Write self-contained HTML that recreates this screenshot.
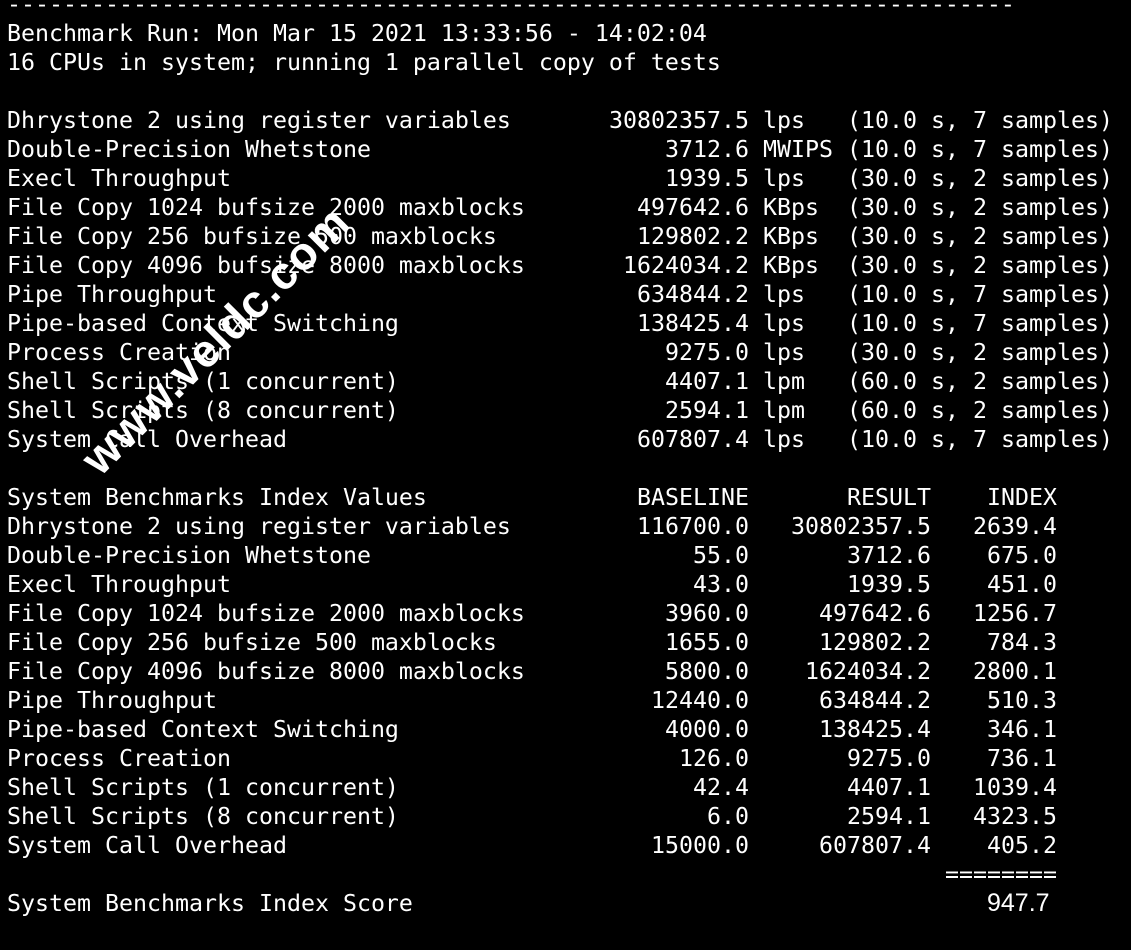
<!DOCTYPE html>
<html><head><meta charset="utf-8"><style>
html,body{margin:0;padding:0;background:#000;width:1131px;height:950px;overflow:hidden;position:relative}
.t{position:absolute;left:7px;top:-10px;font-family:"DejaVu Sans Mono","Liberation Mono",monospace;font-size:23.25px;line-height:29px;color:#fff}
.r{height:29px;white-space:pre}
.r span{display:inline-block;white-space:pre;vertical-align:top}
.n{width:602px}
.v{width:140px;text-align:right}
.u{width:98px}
.b2{width:182px;text-align:right}
.i{width:126px;text-align:right}
.wm{position:absolute;left:215px;top:340px;transform:translate(-50%,-50%) rotate(-45deg);font-family:"Liberation Sans",sans-serif;font-weight:bold;font-size:46px;color:#fff;white-space:nowrap;letter-spacing:1px}
.score{position:absolute;left:987px;top:889px;font-family:"Liberation Sans",sans-serif;font-size:25px;color:#fff}
</style></head><body>
<div class="t"><div class="r">------------------------------------------------------------------------</div><div class="r">Benchmark Run: Mon Mar 15 2021 13:33:56 - 14:02:04</div><div class="r">16 CPUs in system; running 1 parallel copy of tests</div><div class="r"></div><div class="r"><span class="n">Dhrystone 2 using register variables</span><span class="v">30802357.5</span><span class="u"> lps</span>(10.0 s, 7 samples)</div><div class="r"><span class="n">Double-Precision Whetstone</span><span class="v">3712.6</span><span class="u"> MWIPS</span>(10.0 s, 7 samples)</div><div class="r"><span class="n">Execl Throughput</span><span class="v">1939.5</span><span class="u"> lps</span>(30.0 s, 2 samples)</div><div class="r"><span class="n">File Copy 1024 bufsize 2000 maxblocks</span><span class="v">497642.6</span><span class="u"> KBps</span>(30.0 s, 2 samples)</div><div class="r"><span class="n">File Copy 256 bufsize 500 maxblocks</span><span class="v">129802.2</span><span class="u"> KBps</span>(30.0 s, 2 samples)</div><div class="r"><span class="n">File Copy 4096 bufsize 8000 maxblocks</span><span class="v">1624034.2</span><span class="u"> KBps</span>(30.0 s, 2 samples)</div><div class="r"><span class="n">Pipe Throughput</span><span class="v">634844.2</span><span class="u"> lps</span>(10.0 s, 7 samples)</div><div class="r"><span class="n">Pipe-based Context Switching</span><span class="v">138425.4</span><span class="u"> lps</span>(10.0 s, 7 samples)</div><div class="r"><span class="n">Process Creation</span><span class="v">9275.0</span><span class="u"> lps</span>(30.0 s, 2 samples)</div><div class="r"><span class="n">Shell Scripts (1 concurrent)</span><span class="v">4407.1</span><span class="u"> lpm</span>(60.0 s, 2 samples)</div><div class="r"><span class="n">Shell Scripts (8 concurrent)</span><span class="v">2594.1</span><span class="u"> lpm</span>(60.0 s, 2 samples)</div><div class="r"><span class="n">System Call Overhead</span><span class="v">607807.4</span><span class="u"> lps</span>(10.0 s, 7 samples)</div><div class="r"></div><div class="r"><span class="n">System Benchmarks Index Values</span><span class="v">BASELINE</span><span class="b2">RESULT</span><span class="i">INDEX</span></div><div class="r"><span class="n">Dhrystone 2 using register variables</span><span class="v">116700.0</span><span class="b2">30802357.5</span><span class="i">2639.4</span></div><div class="r"><span class="n">Double-Precision Whetstone</span><span class="v">55.0</span><span class="b2">3712.6</span><span class="i">675.0</span></div><div class="r"><span class="n">Execl Throughput</span><span class="v">43.0</span><span class="b2">1939.5</span><span class="i">451.0</span></div><div class="r"><span class="n">File Copy 1024 bufsize 2000 maxblocks</span><span class="v">3960.0</span><span class="b2">497642.6</span><span class="i">1256.7</span></div><div class="r"><span class="n">File Copy 256 bufsize 500 maxblocks</span><span class="v">1655.0</span><span class="b2">129802.2</span><span class="i">784.3</span></div><div class="r"><span class="n">File Copy 4096 bufsize 8000 maxblocks</span><span class="v">5800.0</span><span class="b2">1624034.2</span><span class="i">2800.1</span></div><div class="r"><span class="n">Pipe Throughput</span><span class="v">12440.0</span><span class="b2">634844.2</span><span class="i">510.3</span></div><div class="r"><span class="n">Pipe-based Context Switching</span><span class="v">4000.0</span><span class="b2">138425.4</span><span class="i">346.1</span></div><div class="r"><span class="n">Process Creation</span><span class="v">126.0</span><span class="b2">9275.0</span><span class="i">736.1</span></div><div class="r"><span class="n">Shell Scripts (1 concurrent)</span><span class="v">42.4</span><span class="b2">4407.1</span><span class="i">1039.4</span></div><div class="r"><span class="n">Shell Scripts (8 concurrent)</span><span class="v">6.0</span><span class="b2">2594.1</span><span class="i">4323.5</span></div><div class="r"><span class="n">System Call Overhead</span><span class="v">15000.0</span><span class="b2">607807.4</span><span class="i">405.2</span></div><div class="r"><span class="n"></span><span class="v"></span><span class="b2"></span><span class="i">========</span></div><div class="r">System Benchmarks Index Score</div></div>
<div class="score">947.7</div>
<div class="wm">www.veldc.com</div>
</body></html>
